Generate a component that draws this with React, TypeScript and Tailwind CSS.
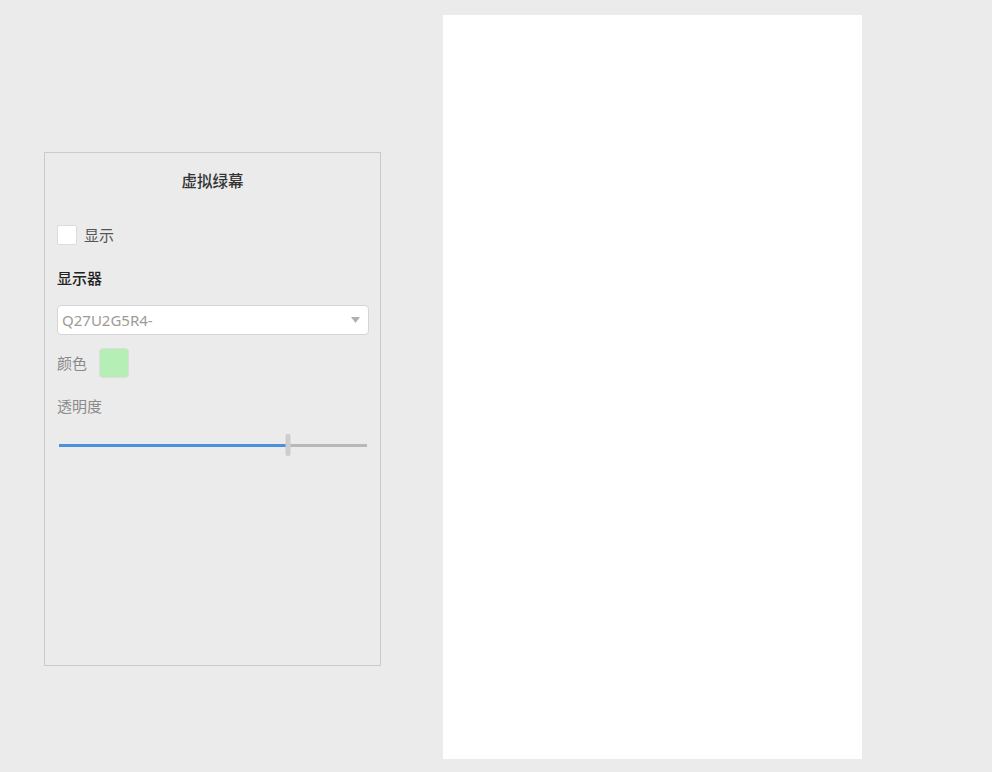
export default function App() {
  const value = 74.5;

  return (
    <div className="flex h-[772px] w-[992px] items-start bg-[#ebebeb] font-['Noto_Sans','Noto_Sans_CJK_SC',sans-serif]">
      {/* settings panel */}
      <div className="ml-[44px] mt-[152px] flex h-[514px] w-[337px] flex-col border border-[#cacaca]">
        <div className="mt-[18px] text-center text-[15.5px] font-medium leading-[20px] text-[#333]">虚拟绿幕</div>

        <label className="ml-[12px] mt-[34px] flex h-[20px] items-center gap-[7px]">
          <span className="h-[20px] w-[20px] rounded-[2px] border border-[#dcdcdc] bg-white" />
          <span className="text-[15px] leading-[20px] text-[#555]">显示</span>
        </label>

        <div className="ml-[12px] mt-[23px] text-[15px] font-medium leading-[20px] text-[#222]">显示器</div>

        <div className="ml-[12px] mt-[17px] flex h-[30px] w-[312px] items-center justify-between rounded-[4px] border border-[#d6d6d6] bg-white pl-[4px] pr-[8px]">
          <span className="text-[15px] text-[#a09a94]">Q27U2G5R4-</span>
          <svg width="9" height="6" viewBox="0 0 9 6">
            <path d="M0 0h9L4.5 6z" fill="#b0b0b0" />
          </svg>
        </div>

        <div className="ml-[12px] mt-[13px] flex items-center gap-[12px]">
          <span className="text-[15px] leading-[20px] text-[#8a8a8a]">颜色</span>
          <span className="h-[30px] w-[30px] rounded-[4px] border border-[#dcdcdc] bg-[#b5efb5]" />
        </div>

        <div className="ml-[12px] mt-[18px] text-[15px] leading-[20px] text-[#8a8a8a]">透明度</div>

        <div className="relative ml-[14px] mt-[18px] flex h-[22px] w-[308px] items-center">
          <div className="flex h-[3px] w-full">
            <div className="h-full bg-[#4a90dc]" style={{ width: `${value}%` }} />
            <div className="h-full flex-1 bg-[#b8b8b8]" />
          </div>
          <div
            className="absolute top-0 h-[22px] w-[5px] -translate-x-1/2 rounded-[2px] bg-[#cdcdcd]"
            style={{ left: `${value}%` }}
          />
        </div>
      </div>

      {/* preview area */}
      <div className="ml-[62px] mt-[15px] h-[744px] w-[419px] bg-white" />
    </div>
  );
}
